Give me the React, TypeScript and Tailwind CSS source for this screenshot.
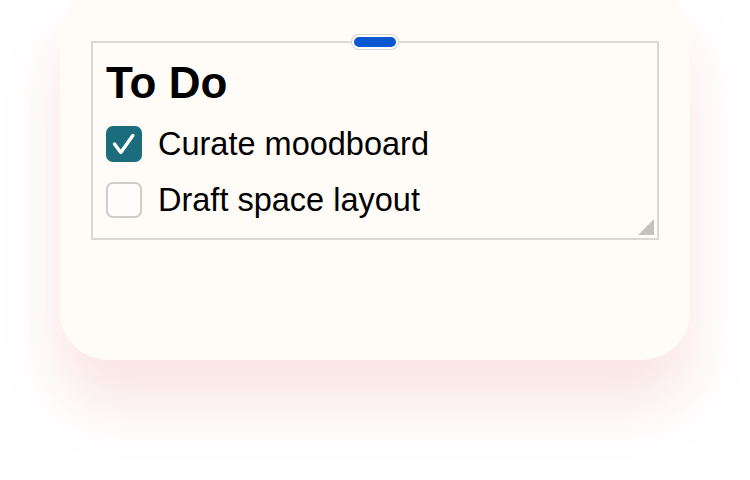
import React from "react";

function CheckedBox() {
  return (
    <div className="w-[36px] h-[36px] rounded-[7px] bg-[#1b6c7d] flex items-center justify-center shrink-0">
      <svg width="36" height="36" viewBox="0 0 36 36" fill="none">
        <path d="M8.5 18 L14.8 26.5 L26.8 9.5" stroke="white" strokeWidth="3.4" strokeLinecap="round" strokeLinejoin="round" />
      </svg>
    </div>
  );
}

function EmptyBox() {
  return <div className="w-[36px] h-[36px] rounded-[7px] border-2 border-[#d2cdc9] bg-[#fffdfb] shrink-0" />;
}

export default function App() {
  return (
    <div
      className="w-[750px] h-[480px] bg-white overflow-hidden pl-[60px]"
      style={{ fontFamily: '"Liberation Sans", Arial, sans-serif' }}
    >
      <div className="w-[630px] h-[372px] -mt-[12px] rounded-[48px] bg-[#fffbf7] shadow-[0_44px_60px_rgba(230,120,120,0.2)] pt-[53px] px-[31px]">
        <div className="relative h-[199px] border-2 border-[#dbd7d3] pl-[13px] pt-[18px]">
          <div className="absolute left-1/2 -translate-x-1/2 top-[-8px] w-[46px] h-[14px] rounded-full bg-[#0b57d0] border-2 border-white ring-1 ring-[#d9d5d1]" />
          <h2 className="text-[44px] leading-[44px] font-bold text-black">To Do</h2>
          <div className="mt-[21px] flex flex-col gap-[20px]">
            <div className="flex items-center gap-[16px] h-[36px]">
              <CheckedBox />
              <span className="text-[32.5px] leading-[36px] text-black">Curate moodboard</span>
            </div>
            <div className="flex items-center gap-[16px] h-[36px]">
              <EmptyBox />
              <span className="text-[32.5px] leading-[36px] text-black">Draft space layout</span>
            </div>
          </div>
          <svg className="absolute right-[3px] bottom-[3px]" width="16" height="16" viewBox="0 0 16 16">
            <polygon points="16,0 16,16 0,16" fill="#c5c1be" />
          </svg>
        </div>
      </div>
    </div>
  );
}
